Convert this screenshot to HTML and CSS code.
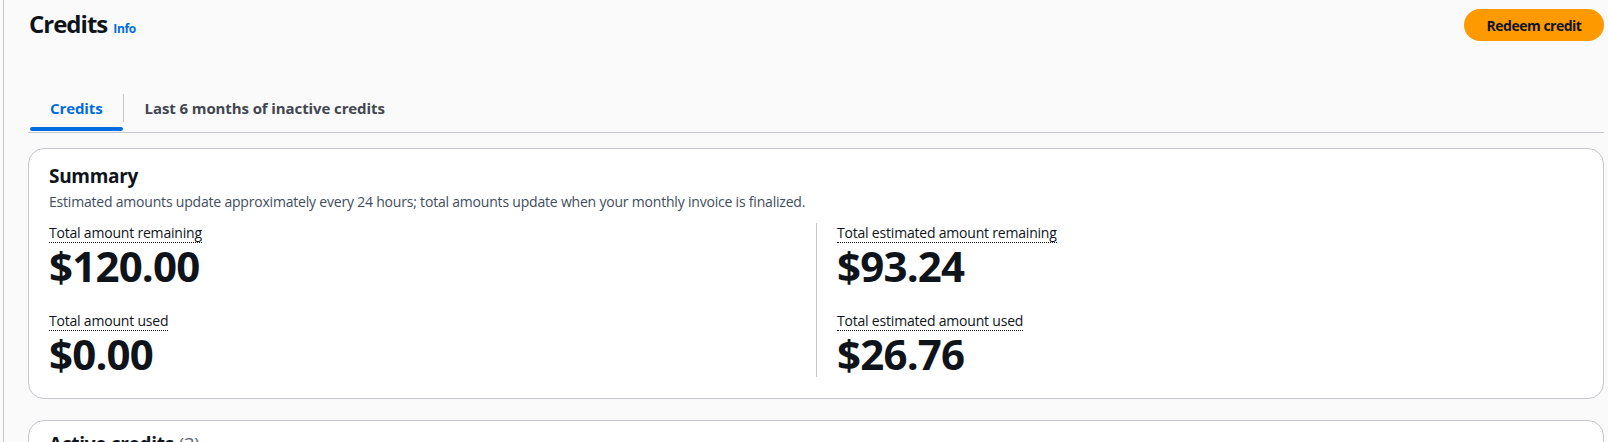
FILE: index.html
```html
<!DOCTYPE html>
<html lang="en">
<head>
<meta charset="utf-8">
<title>Credits</title>
<link rel="stylesheet" href="styles.css">
</head>
<body>
<div class="frame">
  <main class="content">
    <header class="page-header">
      <div class="title-group">
        <h1 class="page-title">Credits</h1>
        <a class="info-link" href="#">Info</a>
      </div>
      <button class="btn-primary" type="button">Redeem credit</button>
    </header>

    <nav class="tabs">
      <div class="tab tab-first tab-active"><span class="tab-label">Credits</span></div>
      <div class="tab-sep"></div>
      <div class="tab"><span class="tab-label">Last 6 months of inactive credits</span></div>
    </nav>

    <section class="card summary">
      <h2 class="card-title">Summary</h2>
      <p class="card-desc">Estimated amounts update approximately every 24 hours; total amounts update when your monthly invoice is finalized.</p>
      <div class="kv-grid">
        <div class="kv-col">
          <div class="kv">
            <span class="kv-label">Total amount remaining</span>
            <div class="kv-value">$120.00</div>
          </div>
          <div class="kv">
            <span class="kv-label">Total amount used</span>
            <div class="kv-value">$0.00</div>
          </div>
        </div>
        <div class="kv-col kv-col-right">
          <div class="kv">
            <span class="kv-label">Total estimated amount remaining</span>
            <div class="kv-value">$93.24</div>
          </div>
          <div class="kv">
            <span class="kv-label">Total estimated amount used</span>
            <div class="kv-value">$26.76</div>
          </div>
        </div>
      </div>
    </section>

    <section class="card active">
      <h2 class="card-title">Active credits <span class="count">(3)</span></h2>
    </section>
  </main>
</div>
</body>
</html>
```

FILE: styles.css
```css
* { box-sizing: border-box; }

html, body {
  margin: 0;
  padding: 0;
  height: 100%;
  overflow: hidden;
}

body {
  background: #fafafa;
  color: #0f141a;
  font-family: "Open Sans", "Liberation Sans", Arial, sans-serif;
  font-size: 14px;
  line-height: 20px;
}

.frame {
  margin-left: 3px;
  border-left: 1px solid #c6c6cd;
  min-height: 100%;
  padding: 0 4px 0 24px;
}

.content {
  display: flex;
  flex-direction: column;
}

.page-header {
  display: flex;
  justify-content: space-between;
  align-items: flex-start;
  padding-top: 9px;
}

.title-group {
  display: flex;
  align-items: baseline;
  gap: 6px;
  padding-left: 1px;
}

.page-title {
  margin: 0;
  font-size: 24px;
  line-height: 30px;
  font-weight: 700;
  letter-spacing: -1px;
}

.info-link {
  color: #006ce0;
  font-size: 12px;
  font-weight: 700;
  letter-spacing: -0.3px;
  text-decoration: none;
}

.btn-primary {
  background: #ff9900;
  border: none;
  border-radius: 16px;
  height: 32px;
  width: 140px;
  padding: 0;
  font-family: inherit;
  font-size: 14px;
  font-weight: 700;
  color: #0f141a;
  letter-spacing: -0.5px;
}

.tabs {
  margin-top: 51px;
  display: flex;
  align-items: flex-start;
  border-bottom: 1px solid #c6c6cd;
  height: 41px;
}

.tab {
  height: 40px;
  padding: 6px 20px 0 21px;
  position: relative;
}

.tab-first {
  padding-left: 22px;
}

.tab-label {
  display: block;
  font-size: 15px;
  line-height: 20px;
  font-weight: 700;
  color: #424650;
  letter-spacing: -0.1px;
}

.tab-active .tab-label { color: #006ce0; }

.tab-active::after {
  content: "";
  position: absolute;
  left: 2px;
  right: 0;
  bottom: 1px;
  height: 4px;
  border-radius: 2px;
  background: #006ce0;
}

.tab-sep {
  width: 1px;
  height: 28px;
  margin-top: 2px;
  background: #c6c6cd;
}

.card {
  background: #ffffff;
  border: 1px solid #c6c6cd;
  border-radius: 16px;
}

.summary {
  margin-top: 15px;
  padding: 15px 20px 21px 20px;
}

.card-title {
  margin: 0;
  font-size: 19px;
  line-height: 24px;
  font-weight: 700;
  letter-spacing: -0.3px;
}

.count {
  font-weight: 400;
  color: #656871;
}

.card-desc {
  margin: 4px 0 0 0;
  font-size: 14px;
  line-height: 20px;
  color: #414d5c;
  letter-spacing: -0.2px;
}

.kv-grid {
  display: grid;
  grid-template-columns: 1fr 1fr;
  margin-top: 11px;
}

.kv-col {
  display: flex;
  flex-direction: column;
  gap: 22px;
}

.kv-col-right {
  border-left: 1px solid #c6c6cd;
  padding-left: 20px;
}

.kv {
  display: flex;
  flex-direction: column;
  align-items: flex-start;
}

.kv-label {
  font-size: 14px;
  line-height: 19px;
  color: #0f141a;
  letter-spacing: -0.2px;
  border-bottom: 1px dotted #0f141a;
}

.kv-value {
  font-size: 42px;
  line-height: 46px;
  font-weight: 700;
  letter-spacing: -0.8px;
}

.active {
  margin-top: 21px;
  height: 60px;
  padding: 11px 20px;
}
```
